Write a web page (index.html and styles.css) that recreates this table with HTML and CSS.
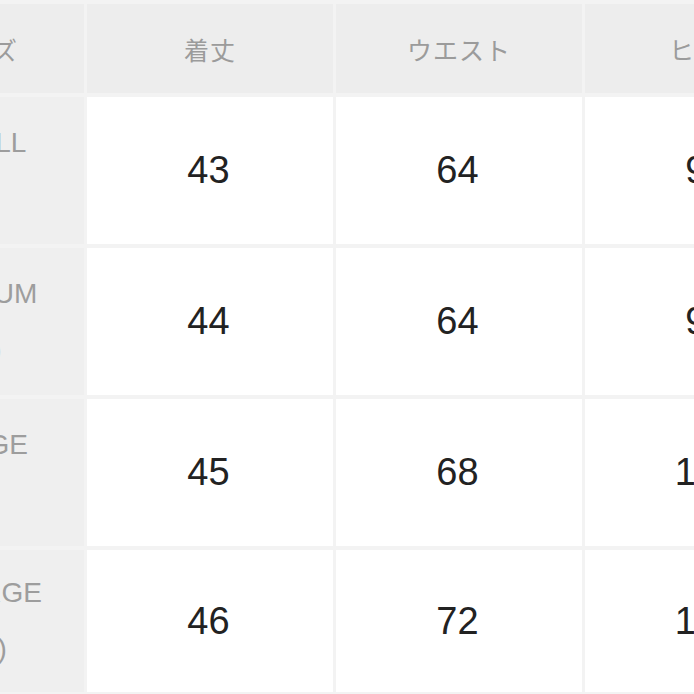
FILE: index.html
```html
<!DOCTYPE html>
<html lang="ja">
<head>
<meta charset="utf-8">
<title>サイズ表</title>
<link rel="stylesheet" href="styles.css">
</head>
<body>
<div class="size-table">
  <div class="cell head label-head">サイズ</div>
  <div class="cell head">着丈</div>
  <div class="cell head">ウエスト</div>
  <div class="cell head">ヒップ</div>
  <div class="cell head">股下</div>

  <div class="cell label">SMALL<br>(S)</div>
  <div class="cell value">43</div>
  <div class="cell value">64</div>
  <div class="cell value">92</div>
  <div class="cell value">70</div>

  <div class="cell label">MEDIUM<br>(M)</div>
  <div class="cell value">44</div>
  <div class="cell value">64</div>
  <div class="cell value">96</div>
  <div class="cell value">71</div>

  <div class="cell label">LARGE<br>(L)</div>
  <div class="cell value">45</div>
  <div class="cell value">68</div>
  <div class="cell value">100</div>
  <div class="cell value">72</div>

  <div class="cell label">X-LARGE<br>(XL)</div>
  <div class="cell value">46</div>
  <div class="cell value">72</div>
  <div class="cell value">104</div>
  <div class="cell value">73</div>
</div>
</body>
</html>
```

FILE: styles.css
```css
html, body {
  margin: 0;
  padding: 0;
  width: 694px;
  height: 694px;
  overflow: hidden;
  background: #f3f3f3;
}

.size-table {
  display: grid;
  grid-template-columns: 209px repeat(4, 246px);
  grid-template-rows: 89px repeat(3, 147px) 142px;
  column-gap: 3px;
  row-gap: 4px;
  padding-top: 4px;
  margin-left: -125px;
  width: max-content;
  background: #f3f3f3;
}

.cell {
  display: flex;
  align-items: center;
  justify-content: center;
  text-align: center;
}

.head {
  background: #ededed;
  color: #9b9b9b;
  font-family: "Noto Sans CJK JP", "Noto Sans", sans-serif;
  font-size: 25px;
  letter-spacing: 1px;
}

.label {
  background: #efefef;
  color: #9d9d9d;
  font-family: "Liberation Sans", Arial, sans-serif;
  font-size: 28px;
  line-height: 56px;
  padding-left: 2px;
}

.value {
  background: #ffffff;
  color: #222222;
  font-family: "Liberation Sans", Arial, sans-serif;
  font-size: 38px;
  padding-right: 3px;
}
```
